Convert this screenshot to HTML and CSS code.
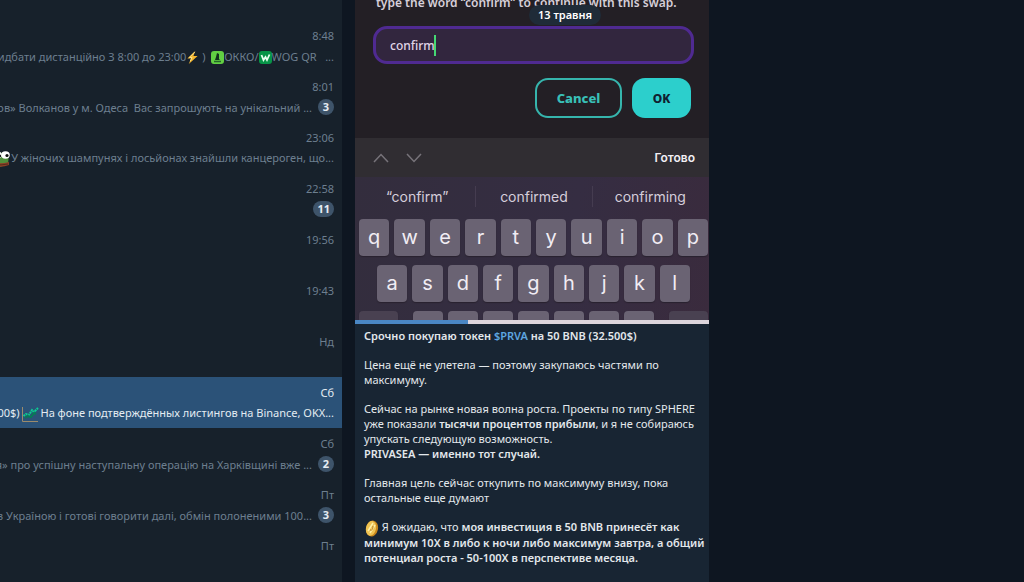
FILE: index.html
```html
<!DOCTYPE html>
<html lang="uk">
<head>
<meta charset="utf-8">
<meta name="viewport" content="width=device-width, initial-scale=1">
<title>Чати</title>
<link rel="stylesheet" href="styles.css">
</head>
<body>
<div class="app">
  <nav class="chats" aria-label="Чати">
    <div class="chat">
      <time class="time">8:48</time>
      <div class="line"><p class="preview">ридбати дистанційно З 8:00 до 23:00<svg class="emoji emoji-small" viewBox="0 0 13 14"><path d="M9.500 0 1 8h4L2.500 14 12 5.500H7.500z" fill="#f5b62e"/><path d="M9 1 3 7h3L4 11" fill="none" stroke="#ffe58a"/></svg> )&nbsp; <svg class="emoji emoji-small" viewBox="0 0 13 13"><rect width="13" height="13" rx="3" fill="#62cf43"/><path d="M6 2l2 1v5l1 1H4l1-3z" fill="#12301c"/><path d="M3 10.500h7" stroke="#24652a" stroke-width="1.500"/></svg>ОККО/<svg class="emoji emoji-small" viewBox="0 0 13 13"><rect width="13" height="13" rx="3" fill="#079447"/><path d="M2.500 4 4.500 9l2-3 1.500 3 2.500-5.500" fill="none" stroke="#e9fff0" stroke-width="1.800"/></svg>WOG QR &nbsp; ...</p></div>
    </div>
    <div class="chat">
      <time class="time">8:01</time>
      <div class="line"><p class="preview">йшов» Волканов у м. Одеса&nbsp; Вас запрошують на унікальний ...</p><span class="badge">3</span></div>
    </div>
    <div class="chat">
      <time class="time">23:06</time>
      <div class="line"><p class="preview"><svg class="emoji emoji-big" viewBox="0 0 17 17"><path d="M1 4Q4 0 8 2q4-2 8 1l-1 10q-6 4-14 2z" fill="#4f8f3b"/><ellipse cx="4.500" cy="4" rx="4.300" ry="3.700" fill="#fff"/><ellipse cx="12.500" cy="4" rx="4.300" ry="3.700" fill="#fff"/><circle cx="6.500" cy="5" r="1.600" fill="#111"/><circle cx="14" cy="4.500" r="1.600" fill="#111"/><path d="M1 12q7 1 15-1v3q-7 3-15 1z" fill="#8d3e27"/><path d="M1 13.500q7 1 14-.5" stroke="#3d2517" fill="none" stroke-width=".7"/></svg>У жіночих шампунях і лосьйонах знайшли канцероген, що...</p></div>
    </div>
    <div class="chat">
      <time class="time">22:58</time>
      <div class="line"><span class="badge">11</span></div>
    </div>
    <div class="chat"><time class="time">19:56</time></div>
    <div class="chat"><time class="time">19:43</time></div>
    <div class="chat"><time class="time">Нд</time></div>
    <div class="chat chat-active">
      <time class="time">Сб</time>
      <div class="line"><p class="preview">0,000$) <svg class="emoji emoji-big" viewBox="0 0 17 17"><path d="M.5 1v14.500H16" fill="none" stroke="#9b8b6c"/><path d="M1.500 10 4 8l3 1 3-5 2 2 4-4" fill="none" stroke="#0ccf92" stroke-width="2" stroke-dasharray="2 .7"/><path d="M3 12 6 10l3 1 3-4 2 1" fill="none" stroke="#067b56" stroke-width="2"/></svg>На фоне подтверждённых листингов на Binance, OKX...</p></div>
    </div>
    <div class="chat">
      <time class="time">Сб</time>
      <div class="line"><p class="preview">тія» про успішну наступальну операцію на Харківщині вже ...</p><span class="badge">2</span></div>
    </div>
    <div class="chat">
      <time class="time">Пт</time>
      <div class="line"><p class="preview">рів з Україною і готові говорити далі, обмін полоненими 100...</p><span class="badge">3</span></div>
    </div>
    <div class="chat"><time class="time">Пт</time></div>
  </nav>

  <main class="history">
    <div class="date">13 травня</div>
    <article class="message">
      <div class="video">
        <div class="dialog">
          <label class="prompt" for="word">type the word “confirm” to continue with this swap.</label>
          <div class="field"><input class="word" id="word" type="text" value="confirm"><span class="caret"></span></div>
          <div class="actions">
            <button class="btn btn-cancel" type="button">Cancel</button>
            <button class="btn btn-ok" type="button">OK</button>
          </div>
        </div>
        <div class="toolbar">
          <button class="arrow" type="button" aria-label="Вгору"><svg viewBox="0 0 16 10"><path d="M1 9 8 1.500 15 9"/></svg></button>
          <button class="arrow" type="button" aria-label="Вниз"><svg viewBox="0 0 16 10"><path d="M1 1 8 8.500 15 1"/></svg></button>
          <button class="done" type="button">Готово</button>
        </div>
        <div class="keyboard">
          <div class="hints">
            <button class="hint" type="button">“confirm”</button>
            <button class="hint" type="button">confirmed</button>
            <button class="hint" type="button">confirming</button>
          </div>
          <div class="keys">
            <button class="key" type="button">q</button><button class="key" type="button">w</button><button class="key" type="button">e</button><button class="key" type="button">r</button><button class="key" type="button">t</button><button class="key" type="button">y</button><button class="key" type="button">u</button><button class="key" type="button">i</button><button class="key" type="button">o</button><button class="key" type="button">p</button>
          </div>
          <div class="keys keys-mid">
            <button class="key" type="button">a</button><button class="key" type="button">s</button><button class="key" type="button">d</button><button class="key" type="button">f</button><button class="key" type="button">g</button><button class="key" type="button">h</button><button class="key" type="button">j</button><button class="key" type="button">k</button><button class="key" type="button">l</button>
          </div>
          <div class="keys keys-cut">
            <span class="key key-shift"></span><span class="key"></span><span class="key"></span><span class="key"></span><span class="key"></span><span class="key"></span><span class="key"></span><span class="key"></span><span class="key key-delete"></span>
          </div>
        </div>
        <div class="progress"><div class="played" style="width:32%"></div></div>
      </div>
      <div class="text">
        <p><b>Срочно покупаю токен <a href="#prva">$PRVA</a> на 50 BNB (32.500$)</b></p>
        <p>Цена ещё не улетела — поэтому закупаюсь частями по<br>максимуму.</p>
        <p>Сейчас на рынке новая волна роста. Проекты по типу SPHERE<br>уже показали <b>тысячи процентов прибыли</b>, и я не собираюсь<br>упускать следующую возможность.<br><b>PRIVASEA — именно тот случай.</b></p>
        <p>Главная цель сейчас откупить по максимуму внизу, пока<br>остальные еще думают</p>
        <p><svg class="emoji coin" viewBox="0 0 15 17"><ellipse cx="8" cy="8.500" rx="6" ry="8" fill="#c8871c" transform="rotate(12 8 8.500)"/><ellipse cx="7" cy="8.300" rx="5" ry="7.500" fill="#efc352" transform="rotate(12 7 8.300)"/><path d="M4 11 9 3M6 13l5-8" stroke="#fff0a8" stroke-width="1.500"/><path d="M6 10q3 1 3-4" stroke="#b97b18" fill="none"/></svg> Я ожидаю, что <b>моя инвестиция в 50 BNB принесёт как<br>минимум 10X в либо к ночи либо максимум завтра, а общий<br>потенциал роста - 50-100X в перспективе месяца.</b></p>
      </div>
    </article>
  </main>
</div>
</body>
</html>
```
FILE: styles.css
```css
* { box-sizing: border-box; }

body {
  margin: 0;
  background: #0e1621;
  font-family: "Noto Sans", "Open Sans", sans-serif;
  font-size: 11px;
  line-height: 15px;
}

p { margin: 0; }

button {
  margin: 0;
  padding: 0;
  border: 0;
  background: none;
  color: inherit;
  font: inherit;
}

.app {
  display: flex;
  height: 100vh;
  overflow: hidden;
}

/* Chat list */
.chats {
  flex: 0 0 342px;
  padding-top: 20px;
  overflow: hidden;
  background: #17212b;
  color: #6d7f8f;
}

.chat {
  display: flex;
  flex-direction: column;
  gap: 4px;
  height: 51px;
  padding: 8px 8px 0 0;
}

.chat-active {
  background: #2b5278;
  color: #e4ecf2;
}

.time { text-align: right; }

.line {
  display: flex;
  justify-content: flex-end;
  align-items: center;
  gap: 6px;
  height: 18px;
}

.preview { white-space: nowrap; }

.badge {
  flex: none;
  min-width: 16px;
  height: 16px;
  padding: 0 4px;
  border-radius: 8px;
  background: #3e546a;
  color: #e6edf3;
  font-weight: 700;
  line-height: 16px;
  text-align: center;
}

.emoji { display: inline-block; }

.emoji-small {
  width: 13px;
  height: 13px;
  vertical-align: -3px;
}

.emoji-big {
  width: 17px;
  height: 17px;
  margin: -1px 1px -1px 0;
  vertical-align: -5px;
}

/* Conversation */
.history {
  position: relative;
  flex: 1;
  padding-left: 13px;
}

.message {
  width: 100%;
  max-width: 354px;
  min-height: 100%;
  background: #182533;
  color: #e3e8ec;
}

.date {
  position: absolute;
  z-index: 1;
  top: 5px;
  left: 187px;
  height: 20px;
  padding: 0 9px;
  border-radius: 10px;
  background: #1f2b38;
  color: #fff;
  font-weight: 600;
  line-height: 20px;
}

.dialog {
  height: 138px;
  padding: 0 15px 0 18px;
  overflow: hidden;
  background: #231f25;
  color: #d6cfd9;
  font-size: 12px;
}

.prompt {
  display: block;
  height: 26px;
  margin-top: -6px;
  padding-left: 3px;
  font-weight: 600;
  line-height: 18px;
  white-space: nowrap;
}

.field {
  position: relative;
  margin-top: 6px;
}

.word {
  display: block;
  width: 100%;
  height: 38px;
  padding: 0 14px;
  border: 3px solid #4f2a91;
  border-radius: 14px;
  outline: 0;
  background: #32263e;
  color: #e0d5e7;
  font: 500 12px/18px "Noto Sans", sans-serif;
}

.caret {
  position: absolute;
  top: 9px;
  left: 61px;
  width: 2px;
  height: 21px;
  background: #45d874;
}

.actions {
  display: flex;
  justify-content: flex-end;
  gap: 10px;
  padding: 14px 3px 0 0;
}

.btn {
  height: 40px;
  border-radius: 13px;
  font-weight: 800;
}

.btn-cancel {
  width: 87px;
  border: 2px solid #36b5ad;
  color: #39c0b8;
  font-size: 13px;
}

.btn-ok {
  width: 59px;
  background: #2ccfcc;
  color: #10202f;
}

.toolbar {
  display: flex;
  align-items: center;
  gap: 17px;
  height: 39px;
  padding: 0 14px 0 18px;
  background: #302d32;
  color: #f2eff4;
}

.arrow {
  width: 16px;
  height: 10px;
}

.arrow svg {
  display: block;
  fill: none;
  stroke: #77737a;
  stroke-width: 1.500;
}

.done {
  margin-left: auto;
  font: 600 12px/18px Inter, sans-serif;
}

.keyboard {
  height: 143px;
  padding: 0 1px 0 4px;
  overflow: hidden;
  background: linear-gradient(100deg, #332d3d, #352d42 60%, #3a2b3d);
  color: #f1edf4;
  font-family: Inter, sans-serif;
}

.hints {
  display: grid;
  grid-template-columns: repeat(3, 1fr);
  height: 42px;
  padding: 9px 0 12px;
  color: #d5cedb;
  font-size: 14px;
}

.hint + .hint { border-left: 1px solid #453c50; }

.keys {
  display: flex;
  gap: 5px;
  height: 37px;
  margin-bottom: 9px;
}

.keys-mid { padding: 0 18px; }

.key {
  flex: 1;
  border-radius: 4px;
  background: #6a6373;
  box-shadow: 0 1px 1px #29222f;
  font-size: 20px;
}

.key-shift,
.key-delete {
  flex: 0 0 39px;
  background: #494151;
}

.key-shift { margin-right: 10px; }
.key-delete { margin-left: 10px; }

.progress {
  height: 4px;
  background: #dcd5dc;
}

.played {
  height: 100%;
  background: #4a87c4;
}

.text {
  display: flex;
  flex-direction: column;
  gap: 14px;
  padding: 4px 9px;
  white-space: nowrap;
}

.text b { font-weight: 600; }

.text a {
  color: #5ea6e0;
  text-decoration: none;
}

.coin {
  width: 15px;
  height: 17px;
  margin: -2px 0;
  vertical-align: -4px;
}
```
